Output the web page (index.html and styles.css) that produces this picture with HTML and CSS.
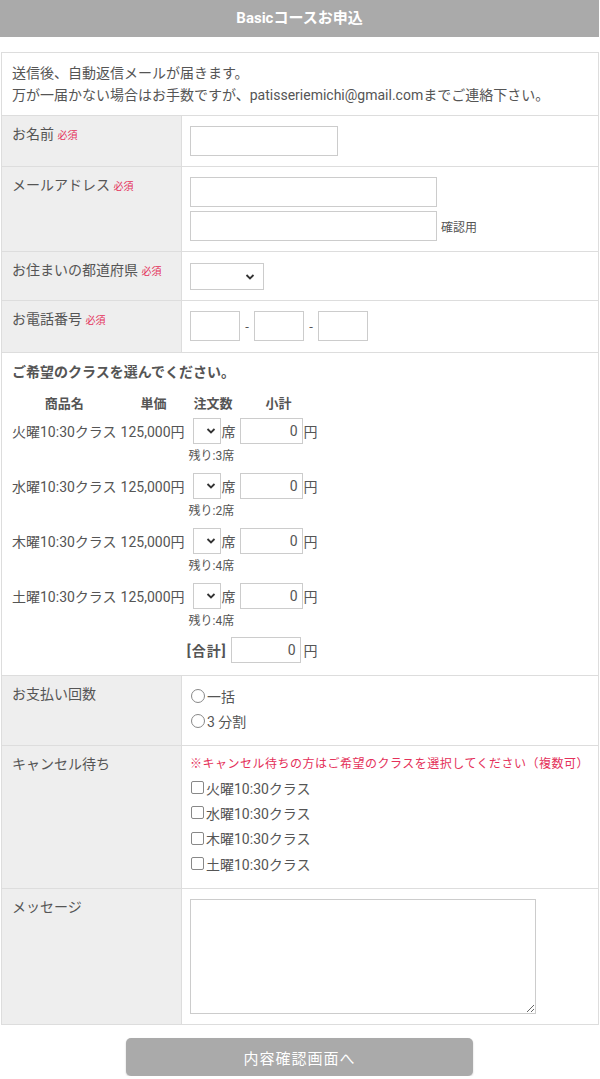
FILE: index.html
```html
<!DOCTYPE html>
<html lang="ja">
<head>
<meta charset="utf-8">
<title>Basicコースお申込</title>
<link rel="stylesheet" href="styles.css">
</head>
<body>
<h1 class="page-title">Basicコースお申込</h1>
<form class="form">
<table class="form-table">
  <tr>
    <td class="notice" colspan="2">送信後、自動返信メールが届きます。<br>万が一届かない場合はお手数ですが、patisseriemichi@gmail.comまでご連絡下さい。</td>
  </tr>
  <tr>
    <th>お名前 <span class="req">必須</span></th>
    <td><input class="text w-name" type="text"></td>
  </tr>
  <tr>
    <th>メールアドレス <span class="req">必須</span></th>
    <td>
      <div class="stack">
        <input class="text w-mail" type="text">
        <div class="line"><input class="text w-mail" type="text"><span class="aside">確認用</span></div>
      </div>
    </td>
  </tr>
  <tr>
    <th>お住まいの都道府県 <span class="req">必須</span></th>
    <td><span class="select w-pref"><svg width="10" height="6" viewBox="0 0 10 6"><path d="M1.5 1 L5 4.5 L8.5 1" fill="none" stroke="#333" stroke-width="1.8"/></svg></span></td>
  </tr>
  <tr>
    <th>お電話番号 <span class="req">必須</span></th>
    <td class="tel-cell">
      <div class="line tel">
        <input class="text w-tel" type="text"><span class="dash">-</span><input class="text w-tel" type="text"><span class="dash">-</span><input class="text w-tel" type="text">
      </div>
    </td>
  </tr>
  <tr>
    <td class="classes" colspan="2">
      <div class="classes-title">ご希望のクラスを選んでください。</div>
      <table class="class-table">
        <tr class="head"><th>商品名</th><th>単価</th><th>注文数</th><th>小計</th></tr>
        <tr class="item">
          <td>火曜10:30クラス</td><td>125,000円</td>
          <td><span class="qty"><span class="select w-qty"><svg width="10" height="6" viewBox="0 0 10 6"><path d="M1.5 1 L5 4.5 L8.5 1" fill="none" stroke="#333" stroke-width="1.8"/></svg></span>席</span></td>
          <td><span class="sub"><input class="text w-sub" type="text" value="0">円</span></td>
        </tr>
        <tr class="remain"><td></td><td></td><td>残り:3席</td><td></td></tr>
        <tr class="item">
          <td>水曜10:30クラス</td><td>125,000円</td>
          <td><span class="qty"><span class="select w-qty"><svg width="10" height="6" viewBox="0 0 10 6"><path d="M1.5 1 L5 4.5 L8.5 1" fill="none" stroke="#333" stroke-width="1.8"/></svg></span>席</span></td>
          <td><span class="sub"><input class="text w-sub" type="text" value="0">円</span></td>
        </tr>
        <tr class="remain"><td></td><td></td><td>残り:2席</td><td></td></tr>
        <tr class="item">
          <td>木曜10:30クラス</td><td>125,000円</td>
          <td><span class="qty"><span class="select w-qty"><svg width="10" height="6" viewBox="0 0 10 6"><path d="M1.5 1 L5 4.5 L8.5 1" fill="none" stroke="#333" stroke-width="1.8"/></svg></span>席</span></td>
          <td><span class="sub"><input class="text w-sub" type="text" value="0">円</span></td>
        </tr>
        <tr class="remain"><td></td><td></td><td>残り:4席</td><td></td></tr>
        <tr class="item">
          <td>土曜10:30クラス</td><td>125,000円</td>
          <td><span class="qty"><span class="select w-qty"><svg width="10" height="6" viewBox="0 0 10 6"><path d="M1.5 1 L5 4.5 L8.5 1" fill="none" stroke="#333" stroke-width="1.8"/></svg></span>席</span></td>
          <td><span class="sub"><input class="text w-sub" type="text" value="0">円</span></td>
        </tr>
        <tr class="remain"><td></td><td></td><td>残り:4席</td><td></td></tr>
        <tr class="total">
          <td colspan="4"><span class="sum"><b>[合計]</b><input class="text w-total" type="text" value="0">円</span></td>
        </tr>
      </table>
    </td>
  </tr>
  <tr>
    <th>お支払い回数</th>
    <td class="choices pay">
      <label class="choice"><span class="radio"></span>一括</label>
      <label class="choice"><span class="radio"></span> 3 分割</label>
    </td>
  </tr>
  <tr>
    <th>キャンセル待ち</th>
    <td class="choices wait">
      <div class="warn">※キャンセル待ちの方はご希望のクラスを選択してください（複数可）</div>
      <label class="choice"><span class="check"></span>火曜10:30クラス</label>
      <label class="choice"><span class="check"></span>水曜10:30クラス</label>
      <label class="choice"><span class="check"></span>木曜10:30クラス</label>
      <label class="choice"><span class="check"></span>土曜10:30クラス</label>
    </td>
  </tr>
  <tr>
    <th>メッセージ</th>
    <td><textarea class="message"></textarea></td>
  </tr>
</table>
<div class="actions"><button type="button" class="submit">内容確認画面へ</button></div>
</form>
</body>
</html>
```

FILE: styles.css
```css
* { box-sizing: border-box; }
html, body { margin: 0; padding: 0; background: #fff; }
body {
  width: 600px;
  font-family: Roboto, "Noto Sans CJK JP", sans-serif;
  font-size: 14px;
  color: #555;
}
.page-title {
  margin: 0;
  width: 599px;
  height: 37px;
  background: #aaa;
  color: #fff;
  font-size: 15px;
  font-weight: bold;
  line-height: 37px;
  text-align: center;
}
.form { margin: 15px 0 0 1px; width: 598px; }
.form-table {
  width: 598px;
  border-collapse: collapse;
}
.form-table > tbody > tr > th,
.form-table > tbody > tr > td {
  border: 1px solid #ddd;
  vertical-align: top;
}
.form-table > tbody > tr > th {
  width: 180px;
  background: #eee;
  font-weight: normal;
  text-align: left;
  padding: 9px 10px;
  line-height: 18px;
}
.form-table > tbody > tr > td {
  padding: 10px 8px;
}
.form-table > tbody > tr > td.notice {
  padding: 9px 10px 9px;
  line-height: 22px;
}
.req { color: #e4315a; font-size: 10px; }
.text {
  display: block;
  height: 30px;
  border: 1px solid #ccc;
  background: #fff;
  font: inherit;
  color: #555;
  padding: 0 4px;
  margin: 0;
}
.w-name { width: 148px; }
.w-mail { width: 247px; }
.w-tel { width: 50px; }
.stack { display: flex; flex-direction: column; gap: 4px; }
.line { display: flex; align-items: flex-end; gap: 4px; }
.aside { font-size: 12px; line-height: 18px; padding-bottom: 4px; }
.tel { align-items: center; gap: 0; }
.form-table > tbody > tr > td.tel-cell { padding-bottom: 11px; }
.dash { width: 14px; text-align: center; font-size: 13px; }
.select {
  display: flex;
  align-items: center;
  justify-content: flex-end;
  height: 27px;
  border: 1px solid #ccc;
  background: #fff;
}
.w-pref { width: 74px; padding-right: 8px; margin-top: 1px; }
.w-qty { width: 28px; height: 26px; padding-right: 4px; }

.form-table > tbody > tr > td.classes { padding: 9px 10px 10px; }
.classes-title {
  font-weight: bold;
  font-size: 14px;
  line-height: 20px;
  margin-bottom: 8px;
}
.class-table { border-collapse: collapse; }
.class-table th, .class-table td { padding: 0 2px; white-space: nowrap; }
.class-table th:first-child, .class-table td:first-child { padding-left: 0; }
.class-table .head th { height: 24px; font-size: 13px; font-weight: bold; text-align: center; }
.class-table .item td { height: 33px; vertical-align: middle; }
.class-table .item td:nth-child(2) { padding-right: 4px; }
.class-table .item td:nth-child(3) { padding-left: 4px; }
.class-table .remain td { height: 22px; font-size: 12px; line-height: 18px; text-align: center; vertical-align: top; }
.class-table .remain td:nth-child(3) { padding: 0; text-align: left; }
.qty, .sub, .sum { display: flex; align-items: center; gap: 1px; }
.w-sub { width: 63px; height: 26px; text-align: right; }
.class-table .total td { height: 31px; vertical-align: middle; }
.sum { justify-content: flex-end; gap: 3px; }
.sum b { letter-spacing: 1px; margin-right: 1px; }
.w-total { width: 70px; height: 26px; text-align: right; }

.form-table > tbody > tr > td.choices { padding: 7px 8px 12px; }
.choice { display: flex; align-items: center; height: 25px; }
.radio {
  width: 14px; height: 14px;
  border: 1px solid #888;
  border-radius: 50%;
  margin: 0 2px 0 1px;
}
.check {
  width: 13px; height: 13px;
  border: 1px solid #888;
  border-radius: 2px;
  margin: 0 2px 0 1px;
}
.warn { color: #e4315a; font-size: 12px; letter-spacing: 0.5px; line-height: 22px; }
.form-table > tbody > tr > td.wait { padding-top: 7px; padding-bottom: 12px; }
.wait .choice { height: 25.33px; }

.message {
  display: block;
  width: 346px;
  height: 115px;
  border: 1px solid #ccc;
  margin: 0;
  font: inherit;
}
.actions { display: flex; justify-content: center; padding: 13px 0 0; margin-left: -1px; }
.submit {
  width: 347px;
  height: 38px;
  border: none;
  border-radius: 5px;
  background: #aaa;
  color: #fff;
  font-family: Roboto, "Noto Sans CJK JP", sans-serif;
  font-size: 15px;
  letter-spacing: 1px;
  box-shadow: 0 1px 2px rgba(0,0,0,0.2);
}
```
